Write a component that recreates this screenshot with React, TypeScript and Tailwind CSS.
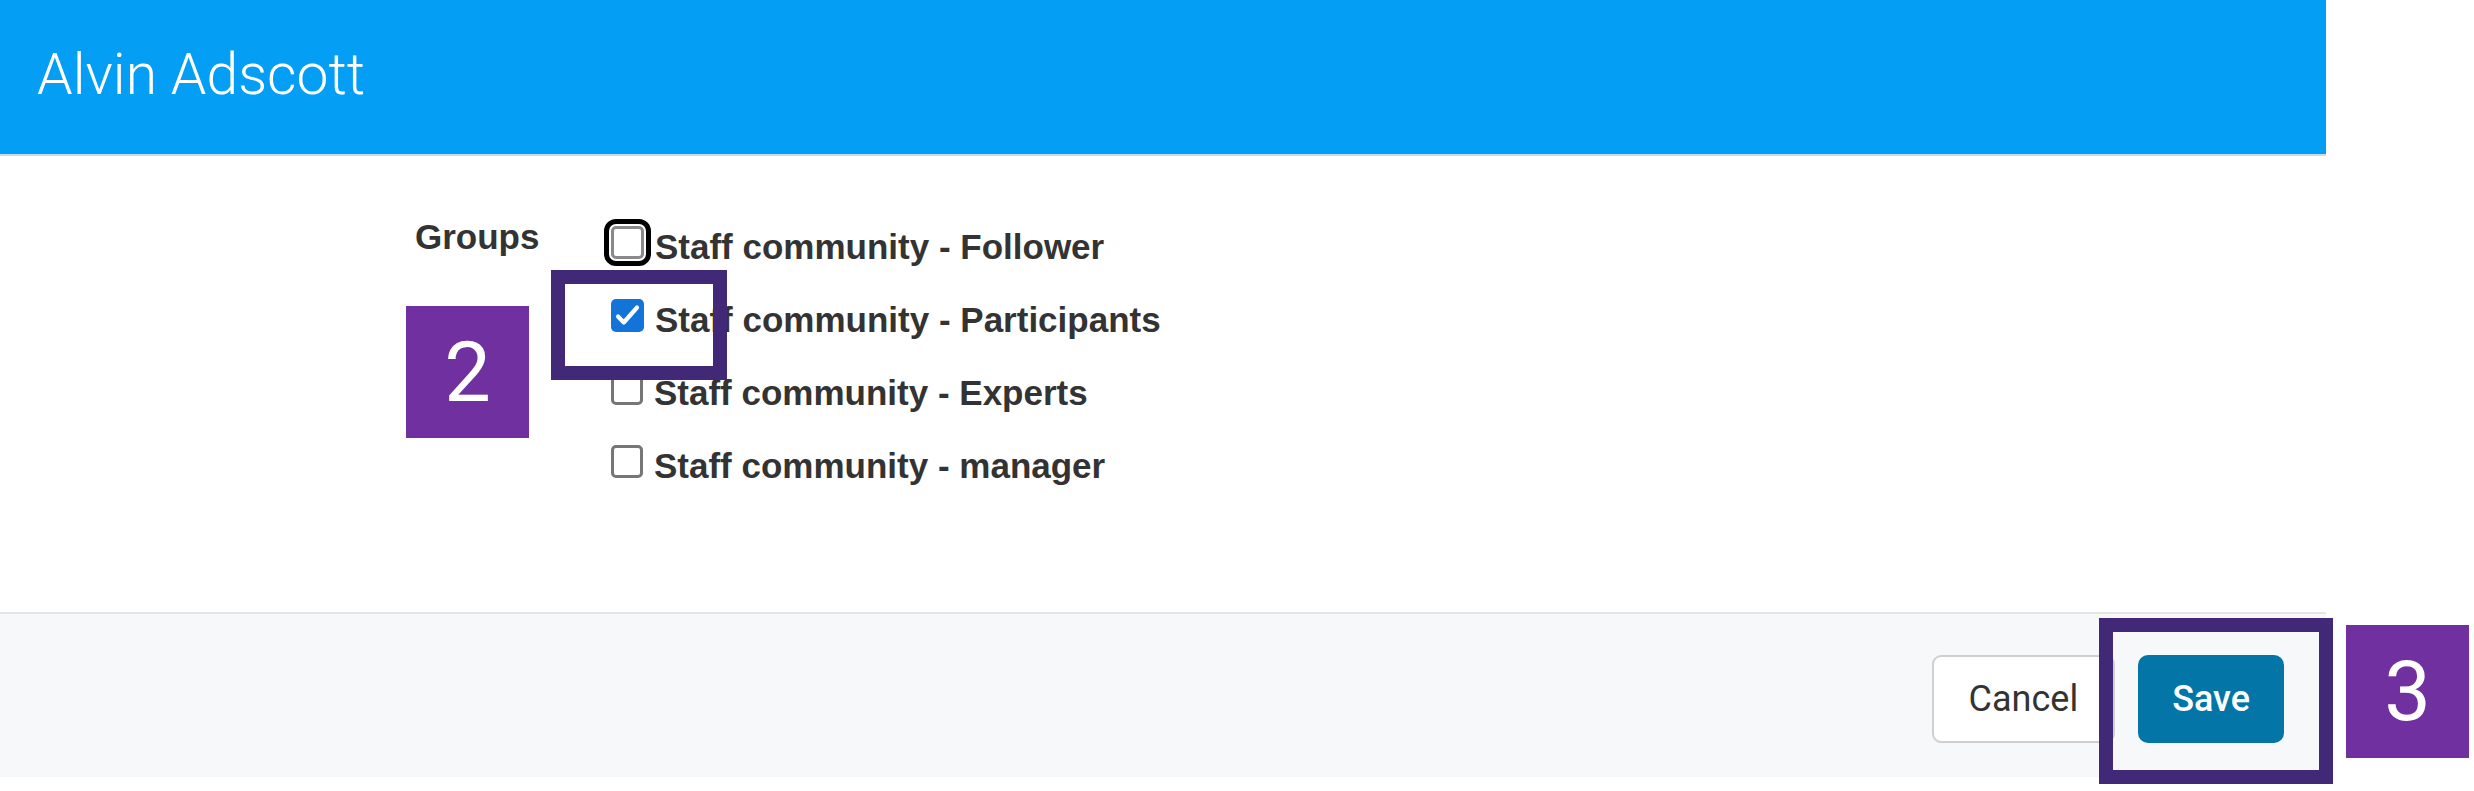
import React from "react";

function Box({ checked, focused }: { checked?: boolean; focused?: boolean }) {
  if (checked) {
    return (
      <span className="relative block h-[33px] w-[33px] shrink-0 rounded-[5px] bg-[#1274d8]">
        <svg className="absolute left-0 top-0" width="33" height="33" viewBox="0 0 33 33" fill="none">
          <path d="M7 17.5 L12.8 23.5 L26 8.5" stroke="white" strokeWidth="4.2" strokeLinecap="round" strokeLinejoin="round" />
        </svg>
      </span>
    );
  }
  return (
    <span
      className={
        focused
          ? "block h-[33px] w-[33px] shrink-0 rounded-[5px] border-[3px] border-[#8a8a8a] bg-white outline-[5px] outline-solid outline-black outline-offset-[2px]"
          : "block h-[33px] w-[32px] shrink-0 rounded-[5px] border-[3px] border-[#767676] bg-white"
      }
    />
  );
}

const rows = [
  { label: "Staff community - Follower", focused: true },
  { label: "Staff community - Participants", checked: true },
  { label: "Staff community - Experts" },
  { label: "Staff community - manager" },
];

export default function App() {
  return (
    <div className="relative h-[791px] w-[2474px] overflow-hidden bg-white">
      <div className="w-[2326px]">
        <div className="flex h-[156px] items-center border-b-2 border-[#c9dbe6] bg-[#049ef4] pb-[6px] pl-[37px]">
          <span className="font-['Roboto',sans-serif] text-[57px] font-light leading-none text-white">
            Alvin Adscott
          </span>
        </div>
        <div className="flex h-[456px] items-start pl-[415px] pt-[50px]">
          <div className="mt-[13px] w-[196px] font-['Liberation_Sans',Arial,sans-serif] text-[35px] font-bold leading-[35px] text-[#333333]">
            Groups
          </div>
          <div className="flex flex-col">
            {rows.map((r) => (
              <div key={r.label} className="flex h-[73px] items-center gap-[11px]">
                <Box checked={r.checked} focused={r.focused} />
                <span className="mt-[7px] font-['Liberation_Sans',Arial,sans-serif] text-[35px] font-bold leading-[35px] text-[#333333]">
                  {r.label}
                </span>
              </div>
            ))}
          </div>
        </div>
        <div className="flex h-[165px] items-center justify-end gap-[23px] border-t-2 border-[#e4e5e7] bg-[#f7f8fa] pr-[42px] pt-[6px]">
          <button className="h-[88px] rounded-[9px] border-2 border-[#cfcfcf] bg-white px-[35px] font-['Roboto',sans-serif] text-[36px] leading-none text-[#333333]">
            Cancel
          </button>
          <button className="h-[88px] rounded-[10px] bg-[#0375a7] px-[34px] font-['Roboto',sans-serif] text-[36px] font-medium leading-none text-white">
            Save
          </button>
        </div>
      </div>

      <div className="absolute left-[406px] top-[306px] flex h-[132px] w-[123px] items-center justify-center bg-[#7030a0] font-['Roboto',sans-serif] text-[83px] font-normal leading-none text-white">
        2
      </div>
      <div className="absolute left-[551px] top-[270px] h-[110px] w-[176px] border-[14px] border-[#412977]" />
      <div className="absolute left-[2099px] top-[618px] h-[166px] w-[234px] border-[14px] border-[#412977]" />
      <div className="absolute left-[2346px] top-[625px] flex h-[133px] w-[123px] items-center justify-center bg-[#7030a0] font-['Roboto',sans-serif] text-[83px] font-normal leading-none text-white">
        3
      </div>
    </div>
  );
}
